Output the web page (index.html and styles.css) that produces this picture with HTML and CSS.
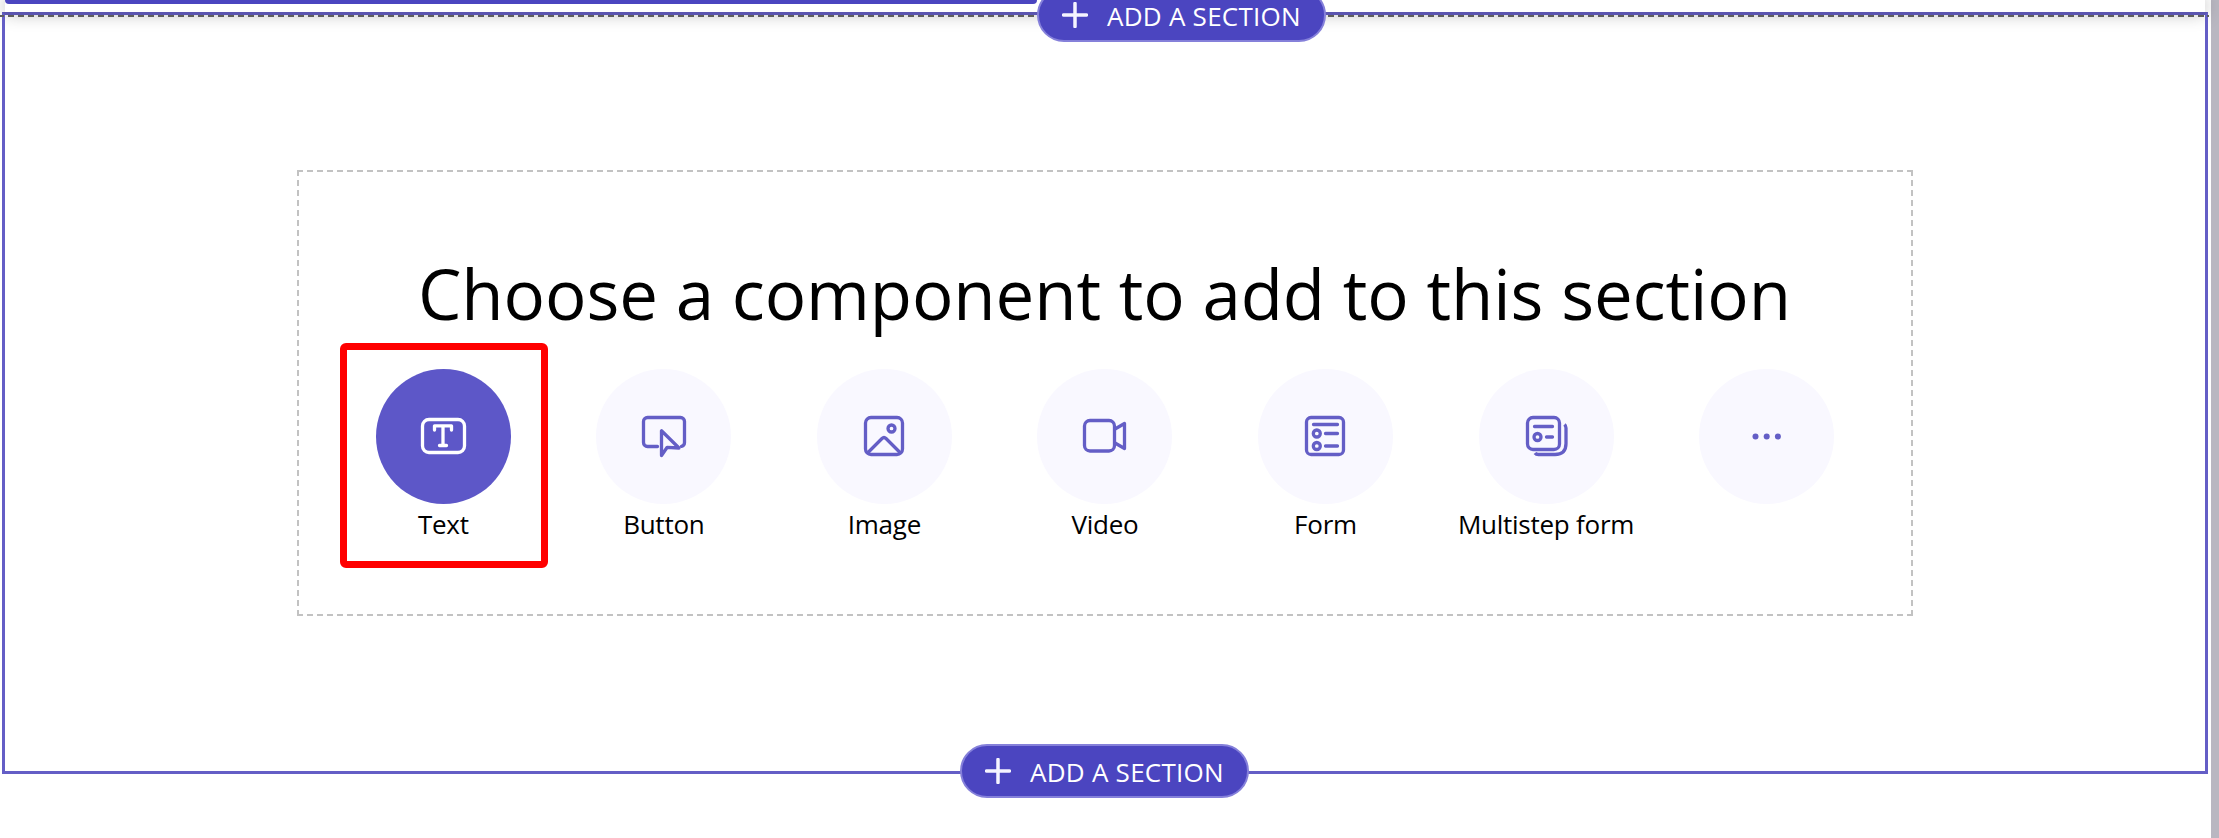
FILE: index.html
```html
<!DOCTYPE html>
<html lang="en">
<head>
<meta charset="utf-8">
<title>Page editor</title>
<link rel="stylesheet" href="styles.css">
</head>
<body>
<div class="editor">
  <div class="canvas">
    <div class="previous"><div class="previous-bar"></div></div>
    <button class="add add-top"><svg class="plus" viewBox="0 0 26 26"><path d="M13 1.5v23M1.5 13h23"/></svg><span class="add-label">ADD A SECTION</span></button>
    <section class="section">
      <div class="divider"></div>
      <div class="panel">
        <h1 class="title"><span class="title-text">Choose a component to add to this section</span></h1>
        <div class="components">
          <div class="item item-active">
            <div class="circle"><svg class="icon" viewBox="0 0 48 48"><rect x="3.5" y="7.5" width="42" height="33" rx="6.5"/><path d="M15.5 18v-4.200h17V18M24 14v19M20.500 33.500h7"/></svg></div>
            <span class="label">Text</span>
            <div class="highlight"></div>
          </div>
          <div class="item">
            <div class="circle"><svg class="icon" viewBox="0 0 48 48"><path d="M17.500 34.500H7.500a4 4 0 0 1-4-4V9.500a4 4 0 0 1 4-4h33a4 4 0 0 1 4 4v21a4 4 0 0 1-3 3.900"/><path d="M21.500 18.800v24.700l5.700-8.200 11.800.7z"/></svg></div>
            <span class="label">Button</span>
          </div>
          <div class="item">
            <div class="circle"><svg class="icon" viewBox="0 0 48 48"><rect x="5.500" y="5.500" width="37" height="37" rx="5.500"/><circle cx="31.500" cy="16.500" r="3.500"/><path d="M8 40.500 22 26.500q2-2 4 0L40 40.500"/></svg></div>
            <span class="label">Image</span>
          </div>
          <div class="item">
            <div class="circle"><svg class="icon" viewBox="0 0 48 48"><rect x="3.500" y="8.500" width="30" height="30.500" rx="5.500"/><path d="m34 17 9.500-5.500V36.500L34 31"/></svg></div>
            <span class="label">Video</span>
          </div>
          <div class="item">
            <div class="circle"><svg class="icon" viewBox="0 0 48 48"><rect x="5.500" y="5.500" width="37" height="37" rx="4.500"/><path d="M12.500 12.500h24M24.500 21.500h12M24.500 34h12"/><circle cx="15.800" cy="21.500" r="3.500"/><circle cx="15.800" cy="34" r="3.500"/></svg></div>
            <span class="label">Form</span>
          </div>
          <div class="item">
            <div class="circle"><svg class="icon" viewBox="0 0 48 48"><rect x="5.500" y="5.500" width="32" height="32" rx="5.500"/><path d="M12.500 14.500h18M24.500 25h6"/><circle cx="15.500" cy="25" r="3.500"/><path d="M42.500 12.500q1.500 1.500 1.500 3.500v15.500q0 11-11 11H16.500q-2.500 0-3.500-1.500" stroke-linecap="butt"/></svg></div>
            <span class="label">Multistep form</span>
          </div>
          <div class="item">
            <div class="circle"><svg class="icon dots" viewBox="0 0 48 48"><circle cx="12.500" cy="24.500" r="3"/><circle cx="23.700" cy="24.500" r="3"/><circle cx="34.900" cy="24.500" r="3"/></svg></div>
          </div>
        </div>
      </div>
      <button class="add add-bottom"><svg class="plus" viewBox="0 0 26 26"><path d="M13 1.500v23M1.500 13h23"/></svg><span class="add-label">ADD A SECTION</span></button>
    </section>
  </div>
  <div class="scrollbar"></div>
</div>
</body>
</html>
```
FILE: styles.css
```css
* { box-sizing: border-box; }
body { margin: 0; background: #fff; color: #000; font-family: "Open Sans", "Noto Sans", sans-serif; }
.editor { display: flex; height: 838px; overflow: hidden; }
.canvas { position: relative; flex: 1; min-width: 0; }
.scrollbar { width: 8px; background: #b9b7c1; }
.previous { height: 12px; margin: 0 6px 0 5px; box-shadow: 0 0 18px rgba(0, 0, 0, .36); }
.previous-bar { width: 1032px; height: 4px; background: #4b45c0; border-radius: 0 0 4px 4px; }
.section { position: relative; width: 2206px; height: 762px; margin-left: 2px; padding: 155px 0 0 292px; border: 3px solid #645ec6; border-top-color: #5b55b0; }
.divider { position: absolute; top: 0; left: -5px; width: 2209px; height: 2px; background: repeating-linear-gradient(90deg, #5e5e5e 0 6px, transparent 6px 10px); background-position: -2px 0; }
.panel { width: 1616px; height: 446px; padding: 76px 38px 0 34px; border: 2px dashed #c2c2c2; }
.title { display: flex; justify-content: center; height: 121px; margin: 0; font-size: 69px; font-weight: 400; line-height: 90px; letter-spacing: -.1px; white-space: nowrap; }
.title-text { margin-left: 3px; }
.components { display: flex; }
.item { position: relative; display: flex; flex: none; flex-direction: column; align-items: center; width: 220.550px; }
.circle { display: flex; align-items: center; justify-content: center; width: 135px; height: 135px; border-radius: 50%; background: #f9f8ff; }
.icon { width: 48px; height: 48px; margin: 0 0 1px; fill: none; stroke: #645ec6; stroke-width: 3.300; stroke-linecap: round; stroke-linejoin: round; }
.item-active .circle { background: #5d57c8; }
.item-active .icon { margin-right: 1px; stroke: #fff; }
.dots { fill: #645ec6; stroke: none; }
.label { font-size: 26px; line-height: 36px; margin-top: 2px; letter-spacing: -.25px; white-space: nowrap; }
.highlight { position: absolute; left: 7px; top: -26px; width: 208px; height: 225px; border: 7.500px solid #f00; border-radius: 6px; }
.add { position: absolute; z-index: 2; display: flex; align-items: center; width: 289px; height: 54px; padding: 0 0 0 23px; gap: 19px; border: 2px solid #8580da; border-radius: 27px; background: #4b45c0; color: #fff; font: 26px "Open Sans", "Noto Sans", sans-serif; white-space: nowrap; }
.add-label { padding-top: 2px; line-height: 30px; letter-spacing: .25px; }
.plus { flex: none; width: 26px; height: 26px; fill: none; stroke: #f5f4ff; stroke-width: 3.500; stroke-linecap: round; }
.add-top { left: 1037px; top: -12px; }
.add-bottom { left: 955px; bottom: -27px; }
```
